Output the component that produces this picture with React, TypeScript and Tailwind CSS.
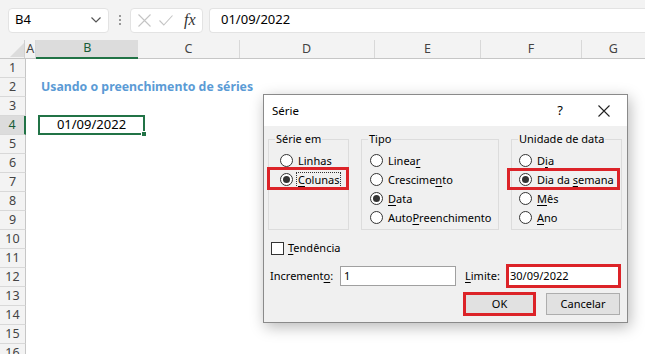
import React from "react";

const font = "font-['Noto_Sans','Open_Sans',sans-serif]";

function Radio({ checked, children, focus }: { checked?: boolean; children: React.ReactNode; focus?: boolean }) {
  return (
    <div className="flex items-center h-[19px] gap-[5px]">
      <span className="w-[13px] h-[13px] rounded-full border border-[#333333] bg-white flex items-center justify-center shrink-0">
        {checked && <span className="w-[7px] h-[7px] rounded-full bg-[#333333]" />}
      </span>
      <span className={focus ? "border border-dotted border-[#333] px-[1px] leading-[14px] -ml-[2px]" : "leading-[14px]"}>{children}</span>
    </div>
  );
}

function Group({ label, className, children }: { label: string; className: string; children: React.ReactNode }) {
  return (
    <div className={"relative border border-[#dcdcdc] h-[91px] pt-[11px] " + className}>
      <span className="absolute -top-[9px] left-[6px] bg-[#f0f0f0] px-[1px] leading-[16px]">{label}</span>
      {children}
    </div>
  );
}

const U = ({ children }: { children: React.ReactNode }) => <span className="underline underline-offset-2">{children}</span>;

export default function App() {
  const rows = Array.from({ length: 16 }, (_, i) => i + 1);
  return (
    <div className={"relative w-[645px] h-[354px] overflow-hidden bg-white text-black " + font}>
      {/* formula bar */}
      <div className="h-[40px] bg-[#f3f3f3] flex items-center pl-[8px]">
        <div className="w-[101px] h-[25px] bg-white border border-[#e3e3e3] rounded-[4px] flex items-center justify-between pl-[6px] pr-[7px] text-[13px]">
          <span>B4</span>
          <svg width="10" height="6" viewBox="0 0 10 6"><polyline points="0.5,0.5 5,5 9.5,0.5" fill="none" stroke="#555" strokeWidth="1.2" /></svg>
        </div>
        <div className="w-[21px] flex flex-col items-center gap-[2px]">
          <span className="w-[2px] h-[2px] bg-[#999]" />
          <span className="w-[2px] h-[2px] bg-[#999]" />
          <span className="w-[2px] h-[2px] bg-[#999]" />
        </div>
        <div className="w-[73px] h-[25px] bg-white border border-[#e3e3e3] rounded-[4px] flex items-center pl-[7px] gap-[8px]">
          <svg width="13" height="13" viewBox="0 0 13 13"><path d="M0.5 0.5 L12.5 12.5 M12.5 0.5 L0.5 12.5" stroke="#c4c4c4" strokeWidth="1.1" /></svg>
          <svg width="14" height="11" viewBox="0 0 14 11"><polyline points="0.5,5.5 4.8,10 13.5,0.5" fill="none" stroke="#c4c4c4" strokeWidth="1.1" /></svg>
          <span className="ml-[3px] font-['Liberation_Serif',serif] italic text-[16px] text-[#333] leading-none">fx</span>
        </div>
        <div className="ml-[6px] flex-1 h-[25px] bg-white border border-[#e3e3e3] rounded-l-[4px] border-r-0 flex items-center pl-[11px] text-[13px]">
          01/09/2022
        </div>
      </div>

      {/* column header */}
      <div className="h-[19px] bg-[#f3f3f3] flex text-[12.5px] text-[#444] border-b border-[#c6c6c6]">
        <div className="w-[26px] relative border-r border-[#d0d0d0]">
          <svg className="absolute left-[10px] top-[3px]" width="14" height="14" viewBox="0 0 14 14"><polygon points="14,0 14,14 0,14" fill="#dcdcdc" /></svg>
        </div>
        <div className="w-[12px] flex items-center justify-center border-r border-[#d8d8d8]">A</div>
        <div className="w-[106px] flex items-center justify-center bg-[#dcdcdc] text-[#185c37] border-b-2 border-[#217346] -mb-[1px]">B</div>
        <div className="w-[106px] flex items-center justify-center border-r border-[#d8d8d8]">C</div>
        <div className="w-[141px] flex items-center justify-center border-r border-[#d8d8d8]">D</div>
        <div className="w-[111px] flex items-center justify-center border-r border-[#d8d8d8]">E</div>
        <div className="w-[105px] flex items-center justify-center border-r border-[#d8d8d8]">F</div>
        <div className="w-[66px] flex items-center justify-center">G</div>
      </div>

      {/* body */}
      <div className="flex">
        <div className="w-[26px] flex flex-col text-[12.5px] text-[#444]">
          {rows.map((r) => (
            <div
              key={r}
              className={
                "h-[19px] shrink-0 flex items-center justify-center border-b border-[#d8d8d8] " +
                (r === 4 ? "bg-[#dcdcdc] text-[#185c37] border-r-2 border-r-[#217346]" : "bg-[#f3f3f3] border-r border-r-[#c6c6c6]")
              }
            >
              {r}
            </div>
          ))}
        </div>
        <div className="flex-1 flex flex-col">
          <div className="h-[19px]" />
          <div className="h-[19px] flex items-center pl-[15px] text-[12.3px] font-bold text-[#5b9bd5] whitespace-nowrap">
            Usando o preenchimento de séries
          </div>
          <div className="h-[19px]" />
          <div className="h-[19px] flex">
            <div className="w-[12px]" />
            <div className="relative w-[107px] h-[20px] -mt-[1px] border-2 border-[#217346] flex items-center justify-center text-[13px]">
              01/09/2022
              <span className="absolute -right-[4px] -bottom-[4px] w-[6px] h-[6px] bg-[#217346] border border-white" />
            </div>
          </div>
        </div>
      </div>

      {/* dialog */}
      <div className="absolute left-[263px] top-[94px] w-[365px] h-[229px] bg-[#f0f0f0] border border-[#8a8a8a] shadow-[2px_4px_14px_rgba(0,0,0,0.28)] text-[11px] flex flex-col">
        <div className="h-[31px] bg-white flex items-center pl-[8px] shrink-0">
          <span className="text-[11.5px]">Série</span>
          <span className="ml-auto mr-[35px] text-[13px]">?</span>
          <svg className="mr-[17px]" width="12" height="12" viewBox="0 0 12 12"><path d="M0.5 0.5 L11.5 11.5 M11.5 0.5 L0.5 11.5" stroke="#222" strokeWidth="1.1" /></svg>
        </div>
        <div className="flex pt-[13px] pl-[4px]">
          <Group label="Série em" className="w-[81px] pl-[11px]">
            <Radio>Lin<U>h</U>as</Radio>
            <Radio checked focus><U>C</U>olunas</Radio>
          </Group>
          <Group label="Tipo" className="ml-[12px] w-[138px] pl-[8px]">
            <Radio>Linea<U>r</U></Radio>
            <Radio>Crescime<U>n</U>to</Radio>
            <Radio checked><U>D</U>ata</Radio>
            <Radio>Auto<U>P</U>reenchimento</Radio>
          </Group>
          <Group label="Unidade de data" className="ml-[12px] w-[111px] pl-[7px]">
            <Radio>D<U>i</U>a</Radio>
            <Radio checked>Dia da <U>s</U>emana</Radio>
            <Radio><U>M</U>ês</Radio>
            <Radio><U>A</U>no</Radio>
          </Group>
        </div>
        <div className="flex items-center mt-[11px] pl-[7px] h-[14px] gap-[4px]">
          <span className="w-[13px] h-[13px] border border-[#333] bg-white" />
          <span><U>T</U>endência</span>
        </div>
        <div className="flex items-center mt-[9px] pl-[6px] h-[24px]">
          <span className="w-[70px]">Increment<U>o</U>:</span>
          <div className="w-[116px] h-[20px] bg-white border border-[#a0a0a0] flex items-center pl-[3px]">1</div>
          <span className="ml-[9px] w-[41px]"><U>L</U>imite:</span>
          <div className="w-[115px] h-[24px] bg-white border-[3px] border-[#dc2328] flex items-center pl-[1px]">30/09/2022</div>
        </div>
        <div className="flex justify-end items-center mt-[4px] pr-[7px] gap-[10px]">
          <div className="w-[73px] h-[24px] bg-[#e1e1e1] border-[3px] border-[#dc2328] flex items-center justify-center">OK</div>
          <div className="w-[74px] h-[22px] bg-[#e1e1e1] border border-[#adadad] flex items-center justify-center">Cancelar</div>
        </div>

        {/* red highlight overlays */}
        <div className="absolute left-[3px] top-[72px] w-[82px] h-[23px] border-[3px] border-[#dc2328]" />
        <div className="absolute left-[243px] top-[73px] w-[113px] h-[22px] border-[3px] border-[#dc2328]" />
      </div>
    </div>
  );
}
